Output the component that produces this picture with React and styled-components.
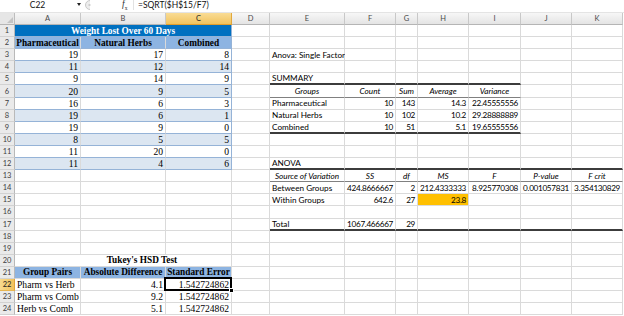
import React from 'react'
import styled, { createGlobalStyle } from 'styled-components'

const COLS = ['A', 'B', 'C', 'D', 'E', 'F', 'G', 'H', 'I', 'J', 'K']
const TEMPLATE = '15px 66px 85px 66px 38px 75px 51px 22px 51px 52px 51px 51px'
const GRID = '#DADADA'
const BLUE = '#95B3D7'
const SERIF = `'Liberation Serif', 'Times New Roman', serif`
const SANS = `Lato, 'Liberation Sans', sans-serif`

const borders = {
  blue: `1px solid ${BLUE}`,
  thick: '2px solid #3C3C3C',
  thin: '1px solid #808080',
}

// ---- sheet contents ----
const cells = {}
const put = (ref, v, o = {}) => {
  cells[ref] = { ...(cells[ref] || {}), v, ...o }
}
const line = (row, from, to, kind) => {
  const a = COLS.indexOf(from)
  const b = COLS.indexOf(to)
  for (let i = a; i <= b; i++) {
    const ref = `${COLS[i]}${row}`
    cells[ref] = { ...(cells[ref] || { v: '' }), bottom: kind }
  }
}

const head = { serif: true, bold: true, align: 'center', bg: '#8DB4E2' }

put('A1', 'Weight Lost Over 60 Days', {
  serif: true,
  bold: true,
  align: 'center',
  bg: '#0070C0',
  color: '#fff',
  span: 3,
  bottom: 'blue',
  right: BLUE,
})
;['Pharmaceutical', 'Natural Herbs', 'Combined'].forEach((v, i) =>
  put(`${COLS[i]}2`, v, { ...head, bottom: 'blue', right: i === 2 ? BLUE : undefined })
)

const weights = [
  [19, 17, 8],
  [11, 12, 14],
  [9, 14, 9],
  [20, 9, 5],
  [16, 6, 3],
  [19, 6, 1],
  [19, 9, 0],
  [8, 5, 5],
  [11, 20, 0],
  [11, 4, 6],
]
weights.forEach((r, i) => {
  const n = i + 3
  r.forEach((v, j) =>
    put(`${COLS[j]}${n}`, v, {
      serif: true,
      align: 'right',
      bg: n % 2 === 0 ? '#DCE6F1' : '#fff',
      bottom: 'blue',
      right: j === 2 ? BLUE : undefined,
    })
  )
})

put('A20', "Tukey's HSD Test", { serif: true, bold: true, align: 'center', span: 3, shift: 38 })
;['Group Pairs', 'Absolute Difference', 'Standard Error'].forEach((v, i) =>
  put(`${COLS[i]}21`, v, head)
)
const tukey = [
  ['Pharm vs Herb', '4.1'],
  ['Pharm vs Comb', '9.2'],
  ['Herb vs Comb', '5.1'],
]
tukey.forEach(([pair, diff], i) => {
  const n = 22 + i
  put(`A${n}`, pair, { serif: true })
  put(`B${n}`, diff, { serif: true, align: 'right' })
  put(`C${n}`, '1.542724862', { serif: true, align: 'right', selected: n === 22 })
})

const row = (n, values, opts = {}) =>
  values.forEach((v, i) => {
    const col = COLS[4 + i]
    put(
      `${col}${n}`,
      v,
      opts.italic
        ? { italic: true, align: 'center' }
        : i === 0
          ? { align: 'left' }
          : { align: 'right', num: true }
    )
  })

put('E3', 'Anova: Single Factor')
put('E5', 'SUMMARY')
row(6, ['Groups', 'Count', 'Sum', 'Average', 'Variance'], { italic: true })
row(7, ['Pharmaceutical', '10', '143', '14.3', '22.45555556'])
row(8, ['Natural Herbs', '10', '102', '10.2', '29.28888889'])
row(9, ['Combined', '10', '51', '5.1', '19.65555556'])
put('E12', 'ANOVA')
row(13, ['Source of Variation', 'SS', 'df', 'MS', 'F', 'P-value', 'F crit'], { italic: true })
row(14, ['Between Groups', '424.8666667', '2', '212.4333333', '8.925770308', '0.001057831', '3.354130829'])
row(15, ['Within Groups', '642.6', '27', '23.8'])
put('H15', '23.8', { bg: '#FFC000' })
row(17, ['Total', '1067.466667', '29'])

line(5, 'E', 'I', 'thick')
line(6, 'E', 'I', 'thin')
line(9, 'E', 'I', 'thick')
line(12, 'E', 'K', 'thick')
line(13, 'E', 'K', 'thin')
line(17, 'E', 'K', 'thick')

const ROWS = Array.from({ length: 24 }, (_, i) => i + 1)

// ---- components ----
const Global = createGlobalStyle`
  *, *::before, *::after { box-sizing: border-box; }
  html, body { margin: 0; padding: 0; background: #fff; overflow: hidden; }
`

const Window = styled.div`
  width: 624px;
  height: 316px;
  overflow: hidden;
  background: #fff;
`

const FormulaBar = styled.div`
  display: flex;
  align-items: center;
  height: 13px;
  padding-bottom: 3px;
  border-bottom: 1px solid #E4E4E4;
  font-family: ${SANS};
  font-size: 8.5px;
  color: #111;
`

const NameBox = styled.div`
  width: 75px;
  text-align: center;
`

const DropArrow = styled.div`
  width: 8px;
  display: flex;
  justify-content: center;
  &::before {
    content: '';
    border-left: 2.5px solid transparent;
    border-right: 2.5px solid transparent;
    border-top: 3px solid #222;
  }
`

const Grip = styled.svg`
  width: 12px;
  height: 10px;
  margin-right: 27px;
`

const FxButton = styled.div`
  width: 10px;
  font-family: ${SERIF};
  font-style: italic;
  font-size: 9.5px;
  color: #333;
  sub {
    font-size: 5.5px;
    font-style: normal;
  }
`

const FormulaText = styled.div`
  border-left: 1px solid #E2E2E2;
  margin-left: 1px;
  padding-left: 4px;
  height: 10px;
  line-height: 10px;
`

const Row = styled.div`
  display: grid;
  grid-template-columns: ${TEMPLATE};
  height: ${(p) => (p.$head ? '12px' : '12.1px')};
`

const Corner = styled.div`
  position: relative;
  background: #E6E6E6;
  border-right: 1px solid #BDBDBD;
  border-bottom: 1px solid #B5B5B5;
  &::after {
    content: '';
    position: absolute;
    right: 1px;
    bottom: 1px;
    border-left: 6px solid transparent;
    border-bottom: 6px solid #C4C4C4;
  }
`

const ColHead = styled.div`
  display: flex;
  align-items: center;
  justify-content: center;
  font-family: ${SANS};
  font-size: 7.5px;
  color: ${(p) => (p.$active ? '#222' : '#4A4A4A')};
  background: ${(p) =>
    p.$active ? 'linear-gradient(#F9DC95, #F1C35E)' : 'linear-gradient(#F7F7F7, #E4E4E4)'};
  border-right: 1px solid ${(p) => (p.$active ? '#E1A83C' : '#C8C8C8')};
  border-bottom: 1px solid ${(p) => (p.$active ? '#E29E2C' : '#B5B5B5')};
`

const RowHead = styled.div`
  display: flex;
  align-items: center;
  justify-content: center;
  font-family: ${SANS};
  font-size: 7.5px;
  color: ${(p) => (p.$active ? '#222' : '#3E3E3E')};
  background: ${(p) => (p.$active ? 'linear-gradient(90deg, #F9D98E, #F2C25C)' : '#EAEAEA')};
  border-right: 1px solid ${(p) => (p.$active ? '#E1A53A' : '#B9B9B9')};
  border-bottom: 1px solid ${(p) => (p.$active ? '#E8B550' : '#D2D2D2')};
`

const justify = { left: 'flex-start', center: 'center', right: 'flex-end' }

const fontSize = (p) => (p.$serif ? (p.$bold ? '9.3px' : '9.6px') : '8.2px')

const Cell = styled.div`
  position: relative;
  grid-column: span ${(p) => p.$span || 1};
  display: flex;
  align-items: center;
  justify-content: ${(p) => justify[p.$align || 'left']};
  padding: 0 2px 0 ${(p) => 2 + (p.$shift || 0)}px;
  white-space: nowrap;
  background: ${(p) => p.$bg || '#fff'};
  color: ${(p) => p.$color || '#000'};
  font-family: ${(p) => (p.$serif ? SERIF : SANS)};
  font-size: ${fontSize};
  font-weight: ${(p) => (p.$bold ? 700 : 400)};
  font-style: ${(p) => (p.$italic ? 'italic' : 'normal')};
  letter-spacing: ${(p) => (p.$num ? '-0.32px' : 'normal')};
  border-right: 1px solid ${(p) => p.$right || GRID};
  border-bottom: ${(p) => borders[p.$bottom] || `1px solid ${GRID}`};
`

const Selection = styled.div`
  position: absolute;
  z-index: 2;
  top: -2px;
  left: -2px;
  right: -1px;
  bottom: -1px;
  border: 2px solid #000;
  pointer-events: none;
  &::after {
    content: '';
    position: absolute;
    right: -4px;
    bottom: -4px;
    width: 5px;
    height: 5px;
    background: #000;
    border: 1px solid #fff;
  }
`

const renderRow = (n) => {
  const out = []
  for (let i = 0; i < COLS.length; i++) {
    const c = cells[`${COLS[i]}${n}`] || { v: '' }
    out.push(
      <Cell
        key={COLS[i]}
        $span={c.span}
        $align={c.align}
        $serif={c.serif}
        $bold={c.bold}
        $italic={c.italic}
        $num={c.num}
        $bg={c.bg}
        $color={c.color}
        $bottom={c.bottom}
        $right={c.right}
        $shift={c.shift}
      >
        {c.v}
        {c.selected && <Selection />}
      </Cell>
    )
    if (c.span) i += c.span - 1
  }
  return out
}

export default function App() {
  return (
    <>
      <Global />
      <Window>
        <FormulaBar>
          <NameBox>C22</NameBox>
          <DropArrow />
          <Grip viewBox="0 0 12 10">
            <path d="M7 0.5 A4.5 4.5 0 0 0 7 9.5" fill="#EDEDED" stroke="#C9C9C9" strokeWidth="1" />
            <rect x="5.5" y="4.5" width="2" height="1" fill="#B0B0B0" />
          </Grip>
          <FxButton>
            f<sub>x</sub>
          </FxButton>
          <FormulaText>=SQRT($H$15/F7)</FormulaText>
        </FormulaBar>
        <Row $head>
          <Corner />
          {COLS.map((c) => (
            <ColHead key={c} $active={c === 'C'}>
              {c}
            </ColHead>
          ))}
        </Row>
        {ROWS.map((n) => (
          <Row key={n}>
            <RowHead $active={n === 22}>{n}</RowHead>
            {renderRow(n)}
          </Row>
        ))}
      </Window>
    </>
  )
}
